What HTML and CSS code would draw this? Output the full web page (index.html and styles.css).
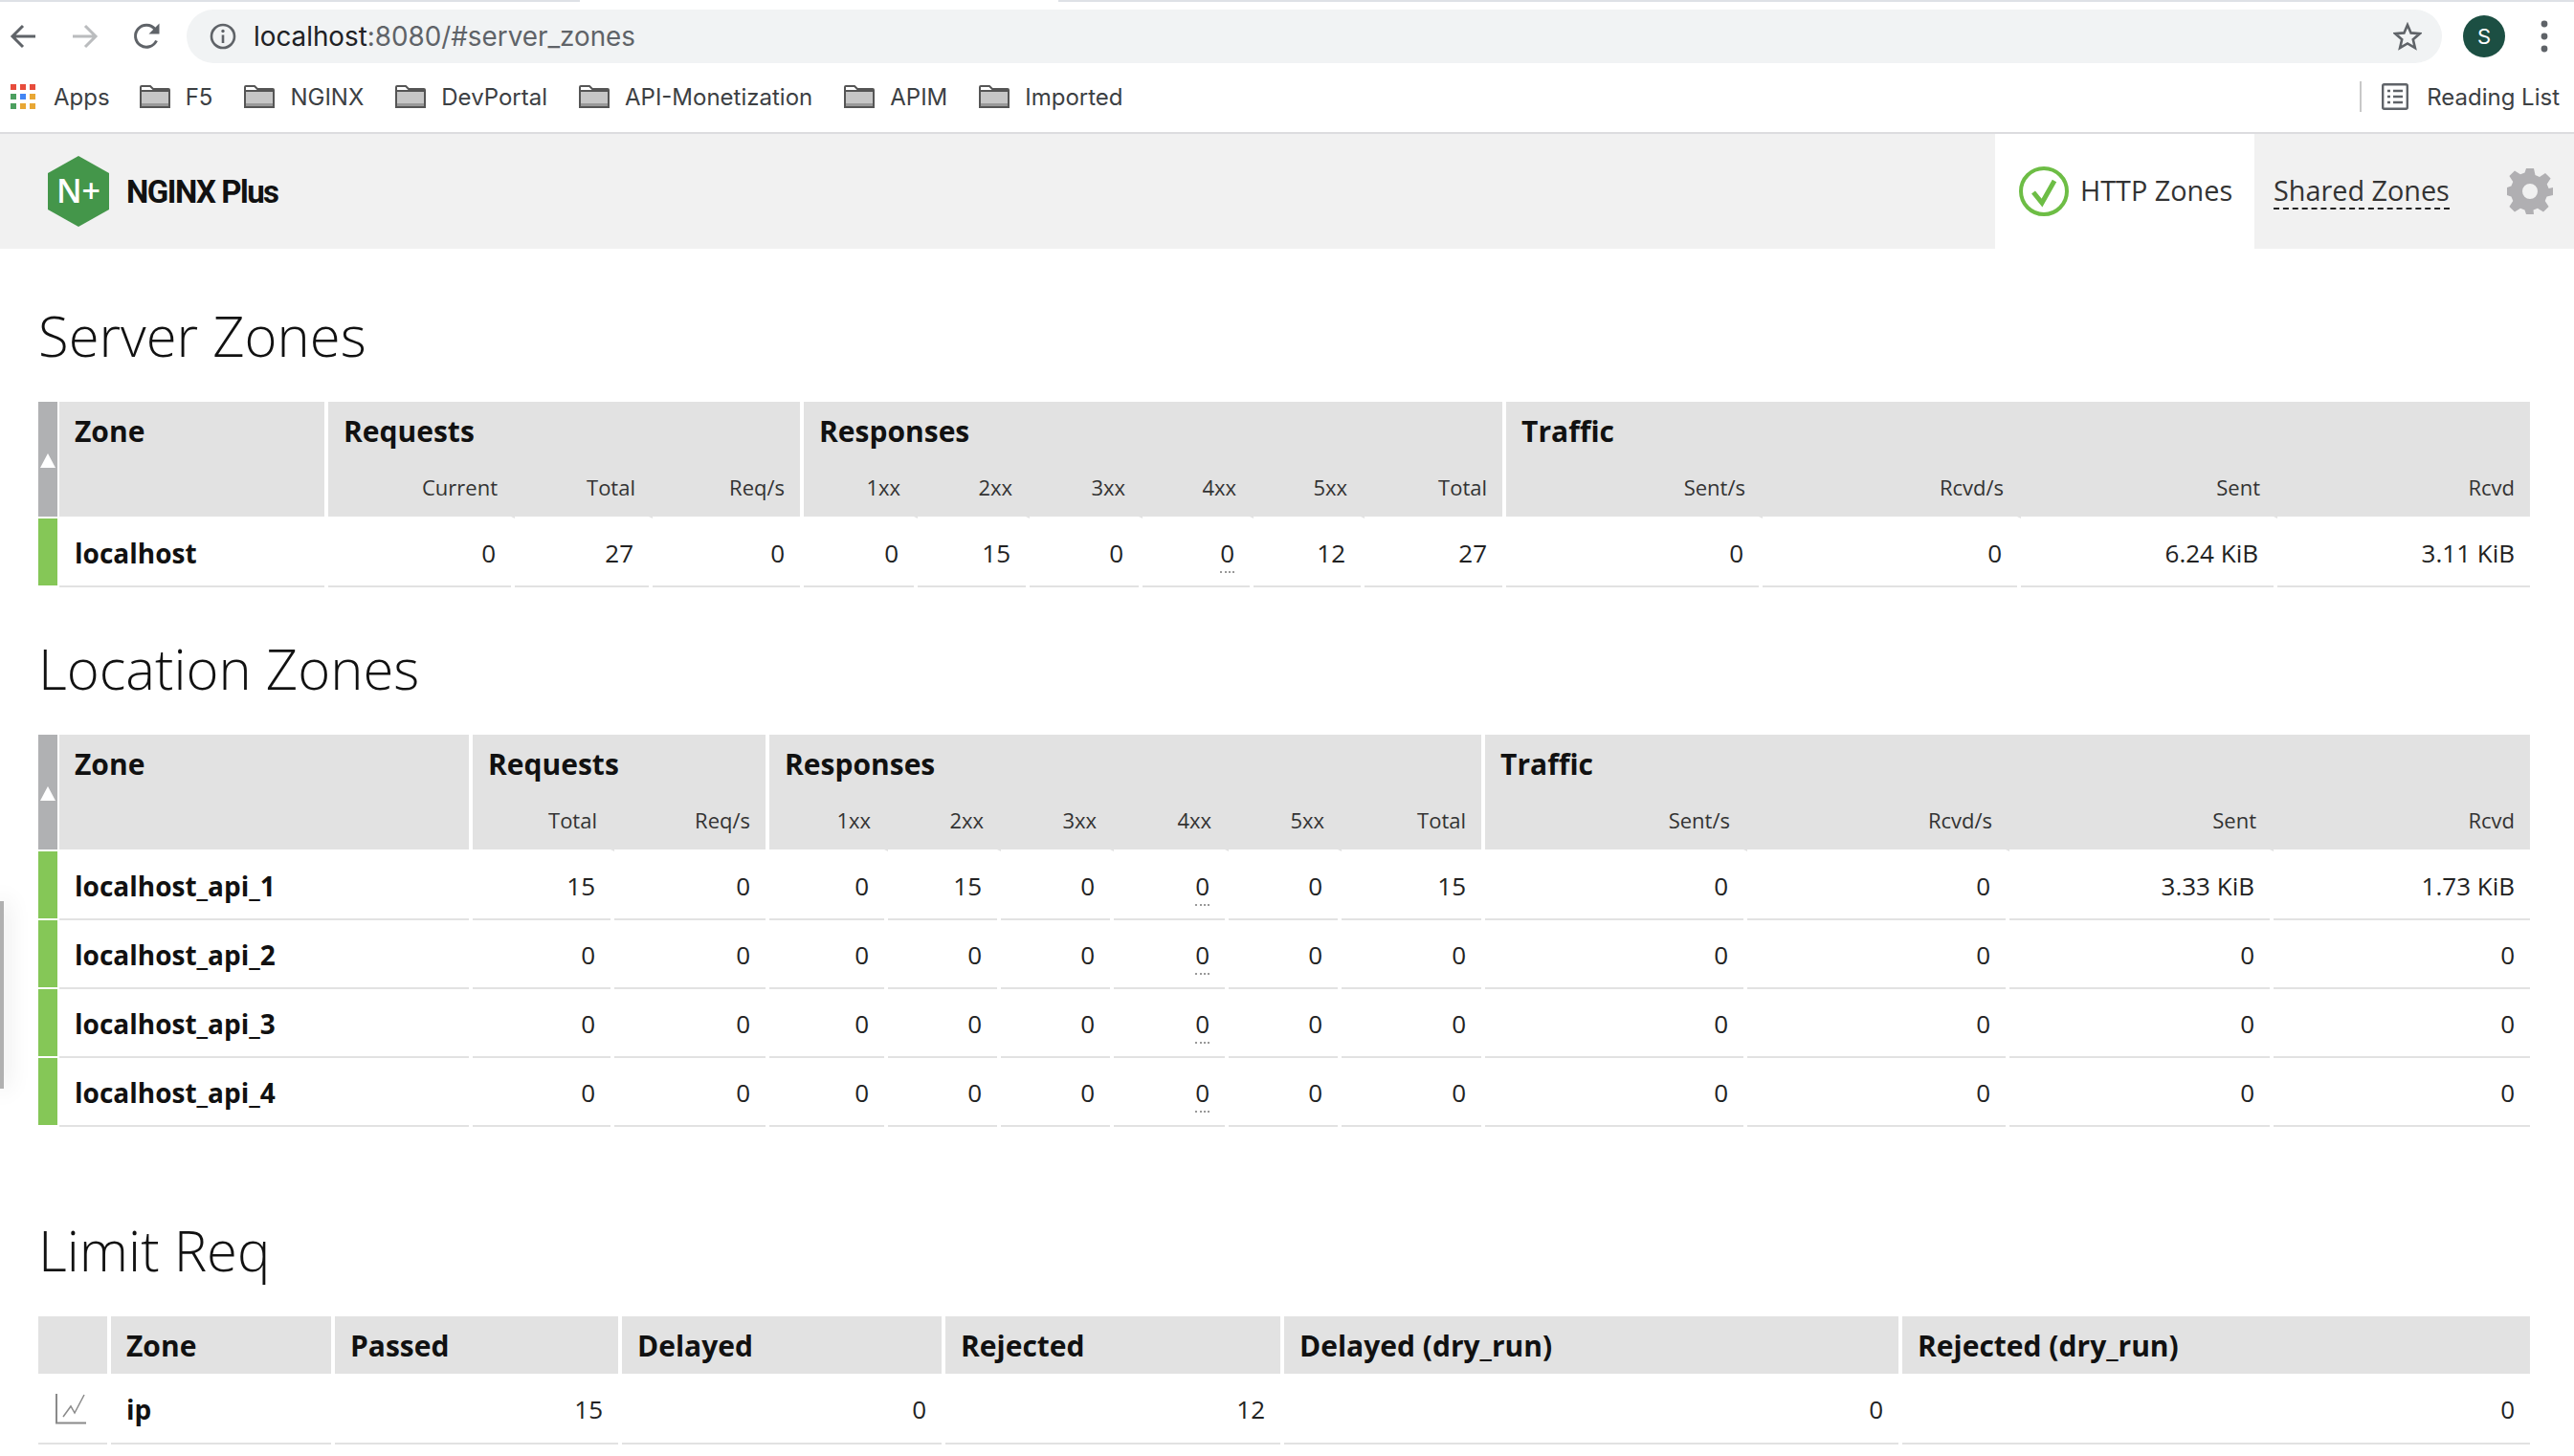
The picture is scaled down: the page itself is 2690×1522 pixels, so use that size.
FILE: index.html
```html
<!DOCTYPE html>
<html lang="en">

<head>
  <meta charset="UTF-8">
  <title>NGINX Plus</title>
  <link rel="stylesheet" href="styles.css">
</head>

<body>
  <div class="tabstrip">
    <div class="strip-left"></div>
    <div class="strip-tab"></div>
    <div class="strip-right"></div>
  </div>

  <div class="toolbar">
    <svg class="tool-icon" width="28" height="26" viewBox="0 0 28 26"><path d="M27 13H3M14 2 3 13l11 11" fill="none" stroke="#5f6368" stroke-width="3"/></svg>
    <svg class="tool-icon" width="28" height="26" viewBox="0 0 28 26"><path d="M1 13h24M14 2l11 11-11 11" fill="none" stroke="#babcbe" stroke-width="3"/></svg>
    <svg class="tool-icon" width="30" height="30" viewBox="0 0 30 30"><path d="M24.5 19.5A11.5 11.5 0 1 1 23 7.5" fill="none" stroke="#5f6368" stroke-width="3"/><path d="M27.5 1.5v11h-11z" fill="#5f6368"/></svg>
    <div class="urlbar">
      <svg width="28" height="28" viewBox="0 0 28 28"><circle cx="14" cy="14" r="12" fill="none" stroke="#5f6368" stroke-width="2.6"/><path d="M14 12.5V21" stroke="#5f6368" stroke-width="2.6"/><circle cx="14" cy="8.5" r="1.7" fill="#5f6368"/></svg>
      <span class="url"><span class="url-host">localhost</span>:8080/#server_zones</span>
      <svg class="star" width="30" height="30" viewBox="0 0 30 30"><path d="m15 3 3.6 8.4 9.1.8-6.9 6 2.1 8.9L15 22.4l-7.9 4.7 2.1-8.9-6.9-6 9.1-.8z" fill="none" stroke="#5f6368" stroke-width="2.6"/></svg>
    </div>
    <div class="avatar">S</div>
    <svg class="dots" width="8" height="34" viewBox="0 0 8 34"><circle cx="4" cy="4" r="3.4"/><circle cx="4" cy="17" r="3.4"/><circle cx="4" cy="30" r="3.4"/></svg>
  </div>

  <div class="bookmarks">
    <span class="bookmark bookmark-apps">
      <svg width="26" height="26" viewBox="0 0 26 26">
        <rect width="6" height="6" fill="#e74c3c"/><rect x="10" width="6" height="6" fill="#e74c3c"/><rect x="20" width="6" height="6" fill="#e74c3c"/>
        <rect y="10" width="6" height="6" fill="#4c9f5f"/><rect x="10" y="10" width="6" height="6" fill="#4285f4"/><rect x="20" y="10" width="6" height="6" fill="#e8a735"/>
        <rect y="20" width="6" height="6" fill="#4c9f5f"/><rect x="10" y="20" width="6" height="6" fill="#e8a735"/><rect x="20" y="20" width="6" height="6" fill="#e8a735"/>
      </svg>
      Apps
    </span>
    <span class="bookmark"><svg class="folder" viewBox="0 0 32 24"><use href="#folder"/></svg>F5</span>
    <span class="bookmark"><svg class="folder" viewBox="0 0 32 24"><use href="#folder"/></svg>NGINX</span>
    <span class="bookmark"><svg class="folder" viewBox="0 0 32 24"><use href="#folder"/></svg>DevPortal</span>
    <span class="bookmark"><svg class="folder" viewBox="0 0 32 24"><use href="#folder"/></svg>API-Monetization</span>
    <span class="bookmark"><svg class="folder" viewBox="0 0 32 24"><use href="#folder"/></svg>APIM</span>
    <span class="bookmark"><svg class="folder" viewBox="0 0 32 24"><use href="#folder"/></svg>Imported</span>
    <span class="reading-list">
      <svg width="28" height="28" viewBox="0 0 28 28"><rect x="1.2" y="1.2" width="25.6" height="25.6" rx="1.5" fill="none" stroke="#5f6368" stroke-width="2.4"/><path d="M6 8h3M12 8h10M6 14h3M12 14h10M6 20h3M12 20h10" stroke="#5f6368" stroke-width="2.4"/></svg>
      Reading List
    </span>
  </div>

  <svg class="defs" width="0" height="0">
    <symbol id="folder" viewBox="0 0 32 24">
      <path d="M1 23V2q0-1 1-1h9l3 3h16q1 0 1 1v18z" fill="#fff" stroke="#555" stroke-width="2"/>
      <rect x="2" y="7" width="28" height="15" fill="#c6c6c6"/>
      <rect x="2" y="19" width="28" height="3" fill="#999"/>
      <path d="M1 6h30" stroke="#555" stroke-width="2"/>
    </symbol>
  </svg>

  <nav class="topnav">
    <div class="logo">
      <svg width="64" height="74" viewBox="0 0 64 74">
        <path d="M32 0 64 18v38L32 74 0 56V18z" fill="#44964a"/>
        <text x="32" y="49" class="logo-mark" text-anchor="middle">N+</text>
      </svg>
      <span class="logo-text">NGINX Plus</span>
    </div>
    <a class="tab tab-http">
      <svg width="52" height="52" viewBox="0 0 52 52"><circle cx="26" cy="26" r="24" fill="#fff" stroke="#6dbd45" stroke-width="4"/><path d="m15 27 9 11 13-23" fill="none" stroke="#6dbd45" stroke-width="5"/></svg>
      <span class="tab-label">HTTP Zones</span>
    </a>
    <a class="tab tab-shared"><span class="dashed">Shared Zones</span></a>
    <a class="tab tab-gear">
      <svg width="48" height="48" viewBox="0 0 48 48"><path fill="#b0afb2" fill-rule="evenodd" d="M20 0h8l1.5 7 4.5 1.900 6-3.900 5.600 5.600-3.900 6L43.600 21 48 20v8l-6.400 1.500-1.900 4.500 3.900 6-5.600 5.600-6-3.900-4.500 1.900L28 48h-8l-1.500-4.400-4.500-1.900-6 3.900L2.400 40l3.900-6-1.900-4.500L0 28v-8l4.400-1.500L6.300 14 2.400 8l5.600-5.600 6 3.900 4.500-1.900zM24 16a8 8 0 1 0 0 16 8 8 0 0 0 0-16z"/></svg>
    </a>
  </nav>

  <main class="content">
    <section class="zone-section">
      <h2>Server Zones</h2>
      <table class="stats stats-server">
        <colgroup><col><col><col><col><col><col><col><col><col><col><col><col><col><col><col></colgroup>
        <thead>
          <tr>
            <th class="indicator" rowspan="2"><span class="sort-arrow"></span></th>
            <th class="title" rowspan="2">Zone</th>
            <th class="title" colspan="3">Requests</th>
            <th class="title" colspan="6">Responses</th>
            <th class="title" colspan="4">Traffic</th>
          </tr>
          <tr>
            <th class="sub">Current</th><th class="sub">Total</th><th class="sub end">Req/s</th>
            <th class="sub">1xx</th><th class="sub">2xx</th><th class="sub">3xx</th><th class="sub">4xx</th><th class="sub">5xx</th><th class="sub end">Total</th>
            <th class="sub">Sent/s</th><th class="sub">Rcvd/s</th><th class="sub">Sent</th><th class="sub end">Rcvd</th>
          </tr>
        </thead>
        <tbody>
          <tr>
            <td class="indicator ok"></td><td class="name">localhost</td>
            <td>0</td><td>27</td><td>0</td>
            <td>0</td><td>15</td><td>0</td><td><span class="hint">0</span></td><td>12</td><td>27</td>
            <td>0</td><td>0</td><td>6.24 KiB</td><td>3.11 KiB</td>
          </tr>
        </tbody>
      </table>
    </section>

    <section class="zone-section">
      <h2>Location Zones</h2>
      <table class="stats stats-location">
        <colgroup><col><col><col><col><col><col><col><col><col><col><col><col><col><col></colgroup>
        <thead>
          <tr>
            <th class="indicator" rowspan="2"><span class="sort-arrow"></span></th>
            <th class="title" rowspan="2">Zone</th>
            <th class="title" colspan="2">Requests</th>
            <th class="title" colspan="6">Responses</th>
            <th class="title" colspan="4">Traffic</th>
          </tr>
          <tr>
            <th class="sub">Total</th><th class="sub end">Req/s</th>
            <th class="sub">1xx</th><th class="sub">2xx</th><th class="sub">3xx</th><th class="sub">4xx</th><th class="sub">5xx</th><th class="sub end">Total</th>
            <th class="sub">Sent/s</th><th class="sub">Rcvd/s</th><th class="sub">Sent</th><th class="sub end">Rcvd</th>
          </tr>
        </thead>
        <tbody>
          <tr>
            <td class="indicator ok"></td><td class="name">localhost_api_1</td>
            <td>15</td><td>0</td>
            <td>0</td><td>15</td><td>0</td><td><span class="hint">0</span></td><td>0</td><td>15</td>
            <td>0</td><td>0</td><td>3.33 KiB</td><td>1.73 KiB</td>
          </tr>
          <tr>
            <td class="indicator ok"></td><td class="name">localhost_api_2</td>
            <td>0</td><td>0</td>
            <td>0</td><td>0</td><td>0</td><td><span class="hint">0</span></td><td>0</td><td>0</td>
            <td>0</td><td>0</td><td>0</td><td>0</td>
          </tr>
          <tr>
            <td class="indicator ok"></td><td class="name">localhost_api_3</td>
            <td>0</td><td>0</td>
            <td>0</td><td>0</td><td>0</td><td><span class="hint">0</span></td><td>0</td><td>0</td>
            <td>0</td><td>0</td><td>0</td><td>0</td>
          </tr>
          <tr>
            <td class="indicator ok"></td><td class="name">localhost_api_4</td>
            <td>0</td><td>0</td>
            <td>0</td><td>0</td><td>0</td><td><span class="hint">0</span></td><td>0</td><td>0</td>
            <td>0</td><td>0</td><td>0</td><td>0</td>
          </tr>
        </tbody>
      </table>
    </section>

    <section class="zone-section zone-section-last">
      <h2>Limit Req</h2>
      <table class="stats stats-limit">
        <colgroup><col><col><col><col><col><col><col></colgroup>
        <thead>
          <tr>
            <th class="title"></th><th class="title">Zone</th><th class="title">Passed</th><th class="title">Delayed</th><th class="title">Rejected</th><th class="title">Delayed (dry_run)</th><th class="title">Rejected (dry_run)</th>
          </tr>
        </thead>
        <tbody>
          <tr>
            <td class="chart">
              <svg width="32" height="32" viewBox="0 0 32 32"><path d="M1 0v30.500h31" fill="none" stroke="#8a8a8a" stroke-width="2"/><path d="m8 24 8-11 4 7L30 1" fill="none" stroke="#8a8a8a" stroke-width="1.500"/></svg>
            </td>
            <td class="name">ip</td><td>15</td><td>0</td><td>12</td><td>0</td><td>0</td>
          </tr>
        </tbody>
      </table>
    </section>
  </main>

  <div class="side-handle"></div>
</body>

</html>
```

FILE: styles.css
```css
* {
  box-sizing: border-box;
}

html,
body {
  margin: 0;
  padding: 0;
  height: 1522px;
  overflow: hidden;
}

body {
  background: #fff;
  font-family: "Open Sans", sans-serif;
  color: #222;
}

/* browser chrome */
.tabstrip {
  display: flex;
  height: 2px;
}

.strip-left {
  width: 606px;
  background: #dee1e6;
}

.strip-tab {
  width: 500px;
}

.strip-right {
  flex: 1;
  background: #dee1e6;
}

.toolbar {
  display: flex;
  align-items: center;
  height: 70px;
  padding: 2px 0 0 10px;
  color: #3c4043;
}

.tool-icon {
  flex: none;
  margin-right: 37px;
}

.tool-icon:nth-child(2) {
  margin-right: 36px;
}

.tool-icon:nth-child(3) {
  margin-right: 26px;
}

.urlbar {
  display: flex;
  align-items: center;
  width: 2357px;
  height: 56px;
  padding: 0 21px 0 24px;
  border-radius: 28px;
  background: #f1f3f4;
}

.url {
  margin-left: 18px;
  font-family: Inter, sans-serif;
  font-size: 27.800px;
  color: #5f6368;
}

.url-host {
  color: #202124;
}

.star {
  margin-left: auto;
}

.avatar {
  width: 44px;
  height: 44px;
  margin-left: 22px;
  border-radius: 50%;
  background: #1c4f43;
  color: #fff;
  font-family: Inter, sans-serif;
  font-size: 22px;
  line-height: 44px;
  text-align: center;
}

.dots {
  margin-left: 37px;
  fill: #5f6368;
}

.bookmarks {
  display: flex;
  align-items: center;
  gap: 33px;
  height: 68px;
  padding: 0 15px 8px 11px;
  border-bottom: 2px solid #dcdcdf;
  font-family: Inter, sans-serif;
  font-size: 24px;
  color: #3c4043;
}

.bookmark {
  display: flex;
  align-items: center;
  gap: 16px;
}

.bookmark-apps {
  gap: 19px;
  margin-right: -2px;
}

.folder {
  width: 32px;
  height: 24px;
}

.defs {
  position: absolute;
}

.reading-list {
  display: flex;
  align-items: center;
  gap: 19px;
  height: 32px;
  margin-left: auto;
  padding-left: 21px;
  border-left: 2px solid #c8c8c8;
}

/* dashboard nav */
.topnav {
  display: flex;
  align-items: stretch;
  height: 120px;
  background: #f1f1f1;
}

.logo {
  display: flex;
  align-items: center;
  gap: 18px;
  padding-left: 50px;
  margin-right: auto;
}

.logo-mark {
  font-family: "Open Sans", sans-serif;
  font-size: 34px;
  font-weight: 600;
  fill: #fff;
}

.logo-text {
  font-family: Roboto, sans-serif;
  font-size: 33px;
  font-weight: 700;
  letter-spacing: -1.5px;
  color: #111;
}

.tab {
  display: flex;
  align-items: center;
  font-size: 28.800px;
  color: #333;
}

.tab-label {
  margin-top: -3px;
}

.tab-http {
  gap: 12px;
  width: 271px;
  padding-left: 25px;
  background: #fff;
}

.tab-shared {
  width: 224px;
  padding-left: 20px;
}

.dashed {
  border-bottom: 2px dashed #222;
  line-height: 36px;
}

.tab-gear {
  justify-content: center;
  width: 106px;
  margin-left: 4px;
  padding-left: 14px;
}

/* tables */
.content {
  padding: 51px 0 0 40px;
}

.zone-section {
  margin-bottom: 45px;
}

.zone-section:nth-child(2) {
  margin-bottom: 89px;
}

.zone-section-last {
  margin-bottom: 0;
}

h2 {
  height: 80px;
  margin: 0 0 29px;
  font-size: 58px;
  font-weight: 300;
  line-height: 80px;
  color: #111;
}

.stats {
  width: 2608px;
  border-collapse: separate;
  border-spacing: 0;
  table-layout: fixed;
}

.stats th,
.stats td {
  padding: 0 16px 0 0;
  border-right: 4px solid #fff;
  text-align: right;
}

.stats th {
  background: #e2e2e2;
  background-clip: padding-box;
}

.stats thead tr:first-child {
  height: 60px;
}

.stats thead tr:nth-child(2) {
  height: 62px;
}

.stats th.title {
  padding: 10px 8px 0 16px;
  font-size: 30px;
  font-weight: 700;
  color: #111;
  text-align: left;
  vertical-align: top;
}

.stats th.title[rowspan] {
  border-bottom: 2px solid #fff;
}

.stats th.sub {
  padding: 0 14px 3px 0;
  border-right-color: #e2e2e2;
  border-bottom: 2px solid #fff;
  font-size: 22px;
  font-weight: 400;
  color: #333;
  vertical-align: middle;
}

.stats th.sub.end {
  padding-right: 16px;
  border-right-color: #fff;
}

.stats th.indicator {
  padding: 3px 0 0;
  border-right-width: 2px;
  border-bottom: 2px solid #fff;
  background: #b0b1b3;
  background-clip: padding-box;
  text-align: center;
}

.sort-arrow {
  display: block;
  width: 0;
  height: 0;
  margin: 0 auto;
  border-right: 8px solid transparent;
  border-bottom: 15px solid #fff;
  border-left: 8px solid transparent;
}

.stats tbody tr {
  height: 72px;
}

.stats td {
  background: linear-gradient(#e2e2e2, #e2e2e2) bottom / 100% 2px no-repeat;
  font-size: 26px;
  color: #222;
}

.stats td.indicator {
  padding: 0;
  border-right-width: 2px;
  border-bottom: 2px solid #fff;
  background: #85c757;
  background-clip: padding-box;
}

.stats td.name {
  padding-left: 16px;
  font-size: 28px;
  font-weight: 700;
  color: #111;
  text-align: left;
}

.stats td.chart {
  padding: 0 4px 0 0;
  text-align: center;
}

.chart svg {
  display: block;
  margin: 0 auto;
}

.hint {
  padding-bottom: 1px;
  border-bottom: 2px dotted #999;
}

.stats-server col:nth-child(1),
.stats-location col:nth-child(1) {
  width: 22px;
}

.stats-server col:nth-child(2) { width: 281px; }
.stats-server col:nth-child(3) { width: 195px; }
.stats-server col:nth-child(4) { width: 144px; }
.stats-server col:nth-child(5) { width: 158px; }
.stats-server col:nth-child(6) { width: 119px; }
.stats-server col:nth-child(7) { width: 117px; }
.stats-server col:nth-child(8) { width: 118px; }
.stats-server col:nth-child(9) { width: 116px; }
.stats-server col:nth-child(10) { width: 116px; }
.stats-server col:nth-child(11) { width: 148px; }
.stats-server col:nth-child(12) { width: 268px; }
.stats-server col:nth-child(13) { width: 270px; }
.stats-server col:nth-child(14) { width: 268px; }
.stats-server col:nth-child(15) { width: 268px; }

.stats-location col:nth-child(2) { width: 432px; }
.stats-location col:nth-child(3) { width: 148px; }
.stats-location col:nth-child(4) { width: 162px; }
.stats-location col:nth-child(5) { width: 124px; }
.stats-location col:nth-child(6) { width: 118px; }
.stats-location col:nth-child(7) { width: 118px; }
.stats-location col:nth-child(8) { width: 120px; }
.stats-location col:nth-child(9) { width: 118px; }
.stats-location col:nth-child(10) { width: 150px; }
.stats-location col:nth-child(11) { width: 274px; }
.stats-location col:nth-child(12) { width: 274px; }
.stats-location col:nth-child(13) { width: 276px; }
.stats-location col:nth-child(14) { width: 272px; }

.stats-limit col:nth-child(1) { width: 76px; }
.stats-limit col:nth-child(2) { width: 234px; }
.stats-limit col:nth-child(3) { width: 300px; }
.stats-limit col:nth-child(4) { width: 338px; }
.stats-limit col:nth-child(5) { width: 354px; }
.stats-limit col:nth-child(6) { width: 646px; }
.stats-limit col:nth-child(7) { width: 660px; }

.stats-limit tbody tr {
  height: 74px;
}

.side-handle {
  position: absolute;
  top: 942px;
  left: 0;
  width: 4px;
  height: 196px;
  background: #b0b0b0;
  box-shadow: 0 0 24px rgba(0, 0, 0, 0.3);
}
```
